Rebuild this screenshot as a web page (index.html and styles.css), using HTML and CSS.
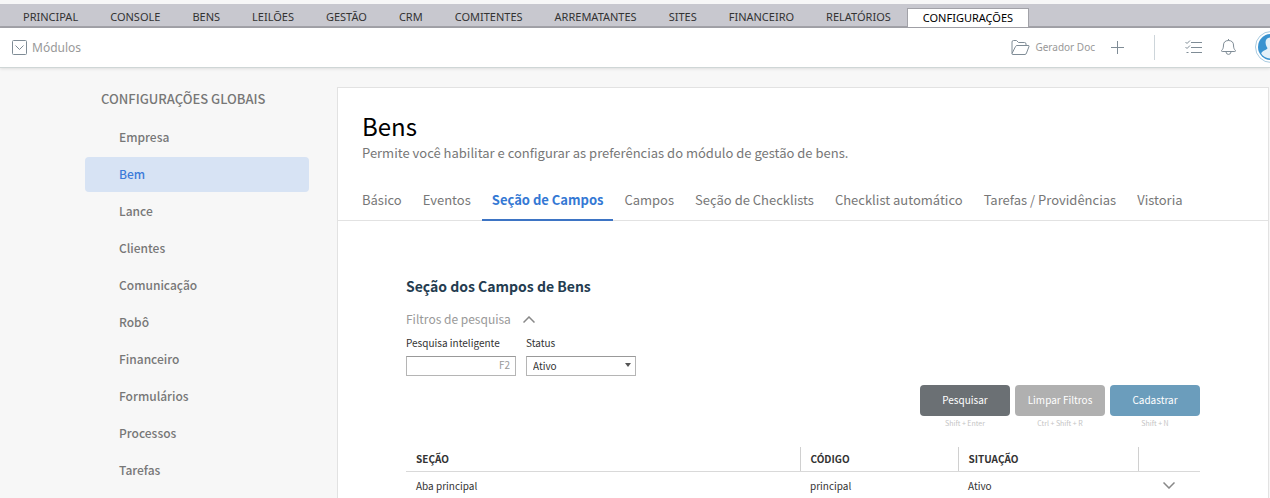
FILE: index.html
```html
<!DOCTYPE html>
<html lang="pt-BR">
<head>
  <meta charset="UTF-8" />
  <meta name="viewport" content="width=device-width, initial-scale=1.0"/>
  <title>Configurações - Bens</title>
  <link rel="stylesheet" href="styles.css">
</head>
<body>
  <nav class="topnav">
    <a href="#">PRINCIPAL</a>
    <a href="#">CONSOLE</a>
    <a href="#">BENS</a>
    <a href="#">LEILÕES</a>
    <a href="#">GESTÃO</a>
    <a href="#">CRM</a>
    <a href="#">COMITENTES</a>
    <a href="#">ARREMATANTES</a>
    <a href="#">SITES</a>
    <a href="#">FINANCEIRO</a>
    <a href="#">RELATÓRIOS</a>
    <a href="#" class="active">CONFIGURAÇÕES</a>
  </nav>

  <header class="toolbar">
    <button class="tool modules" type="button">
      <svg width="15" height="15" viewBox="0 0 15 15"><rect x="0.5" y="0.5" width="14" height="14" rx="1"/><path d="M3.500 5.500l4 4 4-4"/></svg>
      Módulos
    </button>
    <div class="tools">
      <button class="tool doc" type="button">
        <svg width="19" height="15" viewBox="0 0 19 15"><path d="M1 13.500V2Q1 .5 2.500 .5H5.500L7.500 2.500H13.500Q15 2.500 15 4V5.500M1 13.500L4.500 6.500Q5 5.500 6 5.500H17Q18.500 5.500 18 6.500L15.500 13Q15 14.500 14 14.500H2Q.8 14.500 1 13.500Z"/></svg>
        Gerador Doc
      </button>
      <button class="tool" type="button" aria-label="Adicionar">
        <svg width="13" height="13" viewBox="0 0 13 13"><path d="M6.500 0V13M0 6.500H13"/></svg>
      </button>
      <span class="divider"></span>
      <button class="tool" type="button" aria-label="Tarefas">
        <svg width="17" height="14" viewBox="0 0 17 14"><path d="M6 2.500H17M6 7.500H17M6 12.500H17M.5 2l1.500 1.500L5 .5M.5 7l1.500 1.500L5 5.500M1.500 12.500H3.500"/></svg>
      </button>
      <button class="tool bell" type="button" aria-label="Notificações">
        <svg width="15" height="16" viewBox="0 0 15 16"><path d="M7.500 0V1.500M7.500 1.500C4.200 1.500 2.500 3.500 2.500 6C2.500 9.500 1.500 10.500 .6 11.500Q.3 12.500 1.200 12.500H13.800Q14.700 12.500 14.400 11.500C13.500 10.500 12.500 9.500 12.500 6C12.500 3.500 10.800 1.500 7.500 1.500ZM5 13Q5.300 15.400 7.500 15.400Q9.700 15.400 10 13"/></svg>
      </button>
      <button class="avatar" type="button" aria-label="Usuário">
        <svg width="32" height="32" viewBox="0 0 32 32"><circle cx="16" cy="16" r="15.500" fill="#fff" stroke="#a9cbe0"/><circle cx="16" cy="16" r="13" fill="#3993d0" stroke="none"/><path fill="#e3f0f8" stroke="none" d="M16 6.500C12 6.500 10.300 9 10.600 12C10.800 14.500 11.800 16 12.500 17C12.300 19 7.500 19 6.200 22.500C8 26 12 27.500 16 27.500S24 26 25.800 22.500C24.500 19 19.700 19 19.500 17C20.200 16 21.200 14.500 21.400 12C21.700 9 20 6.500 16 6.500Z"/></svg>
      </button>
    </div>
  </header>

  <div class="layout">
    <aside class="sidebar">
      <h2>CONFIGURAÇÕES GLOBAIS</h2>
      <nav class="menu">
        <a href="#">Empresa</a>
        <a href="#" class="active">Bem</a>
        <a href="#">Lance</a>
        <a href="#">Clientes</a>
        <a href="#">Comunicação</a>
        <a href="#">Robô</a>
        <a href="#">Financeiro</a>
        <a href="#">Formulários</a>
        <a href="#">Processos</a>
        <a href="#">Tarefas</a>
      </nav>
    </aside>

    <main class="panel">
      <h1>Bens</h1>
      <p class="intro">Permite você habilitar e configurar as preferências do módulo de gestão de bens.</p>

      <nav class="tabs">
        <a href="#">Básico</a>
        <a href="#">Eventos</a>
        <a href="#" class="active">Seção de Campos</a>
        <a href="#">Campos</a>
        <a href="#">Seção de Checklists</a>
        <a href="#">Checklist automático</a>
        <a href="#">Tarefas / Providências</a>
        <a href="#">Vistoria</a>
      </nav>

      <section class="content">
        <h3>Seção dos Campos de Bens</h3>
        <button class="filter-toggle" type="button">
          Filtros de pesquisa
          <svg width="12" height="7" viewBox="0 0 12 7"><path d="M.5 6.500L6 1l5.500 5.500"/></svg>
        </button>

        <form class="filters">
          <div class="field">
            <label for="busca">Pesquisa inteligente</label>
            <input id="busca" type="text" placeholder="F2">
          </div>
          <div class="field">
            <label for="status">Status</label>
            <div class="select">
              <select id="status">
                <option>Ativo</option>
                <option>Inativo</option>
              </select>
            </div>
          </div>
        </form>

        <div class="actions">
          <div class="action">
            <button class="btn dark" type="button">Pesquisar</button>
            <small>Shift + Enter</small>
          </div>
          <div class="action">
            <button class="btn gray" type="button">Limpar Filtros</button>
            <small>Ctrl + Shift + R</small>
          </div>
          <div class="action">
            <button class="btn blue" type="button">Cadastrar</button>
            <small>Shift + N</small>
          </div>
        </div>

        <table class="list">
          <thead>
            <tr>
              <th>SEÇÃO</th>
              <th class="code">CÓDIGO</th>
              <th class="situation">SITUAÇÃO</th>
              <th class="more"></th>
            </tr>
          </thead>
          <tbody>
            <tr>
              <td>Aba principal</td>
              <td>principal</td>
              <td>Ativo</td>
              <td class="more">
                <button class="expand" type="button" aria-label="Abrir">
                  <svg width="12" height="7" viewBox="0 0 12 7"><path d="M.5 .5L6 6l5.500-5.500"/></svg>
                </button>
              </td>
            </tr>
          </tbody>
        </table>
      </section>
    </main>
  </div>
</body>
</html>
```
FILE: styles.css
```css
* {
  box-sizing: border-box;
}
body {
  margin: 0;
  padding-top: 4px;
  background: #f7f7f7;
  color: #333;
  font-family: "Noto Sans CJK SC", "Noto Sans", sans-serif;
  font-size: 10px;
  overflow: hidden;
}
a {
  color: inherit;
  text-decoration: none;
}
button {
  padding: 0;
  border: none;
  background: none;
  color: inherit;
  font: inherit;
  cursor: pointer;
}
svg {
  display: block;
  fill: none;
  stroke: #7f8c96;
}

/* top menu */
.topnav {
  display: flex;
  align-items: flex-end;
  height: 24px;
  padding-left: 7px;
  background: #c8c8cf;
  border-bottom: 2px solid #a2a2a8;
  font-family: "Noto Sans", sans-serif;
  font-size: 11px;
  line-height: 18px;
}
.topnav a {
  padding: 0 16px;
}
.topnav a.active {
  padding: 0 15px;
  margin-bottom: -1px;
  border: 1px solid #a2a2a8;
  border-bottom: none;
  background: #fff;
  color: #000;
}

/* toolbar */
.toolbar {
  display: flex;
  justify-content: space-between;
  align-items: center;
  height: 40px;
  padding: 0 0 1px 12px;
  overflow: hidden;
  background: #fff;
  border-bottom: 1px solid #cfd6d6;
  box-shadow: 0 1px 3px rgba(0, 0, 0, 0.1);
  font-family: "Noto Sans", sans-serif;
  color: #999;
}
.tool {
  display: flex;
  align-items: center;
  gap: 5px;
}
.modules {
  font-size: 12px;
}
.tools {
  display: flex;
  align-items: center;
  margin-right: -17px;
}
.doc {
  margin-right: 16px;
}
.divider {
  width: 1px;
  height: 25px;
  margin: 0 30px;
  background: #cdd5da;
}
.bell {
  margin: 0 19px;
}

/* page */
.layout {
  display: grid;
  grid-template-columns: 224px 1fr;
  gap: 28px;
  padding: 19px 1px 0 85px;
}
.sidebar h2 {
  margin: 0 0 9px 16px;
  color: #777;
  font-size: 13px;
  font-weight: 500;
  line-height: 24px;
}
.menu {
  display: grid;
  gap: 2px;
}
.menu a {
  height: 35px;
  padding-left: 34px;
  border-radius: 4px;
  color: #777;
  font-size: 12px;
  font-weight: 500;
  line-height: 33px;
}
.menu a.active {
  background: #d7e3f4;
  color: #3d7bd9;
}
.panel {
  background: #fff;
  border: 1px solid #e2e2e2;
}
.panel h1 {
  margin: 21px 24px 0;
  color: #000;
  font-size: 24px;
  font-weight: 400;
  line-height: 34px;
}
.intro {
  margin: 0 24px;
  color: #777;
  font-size: 13px;
  line-height: 20px;
}
.tabs {
  display: flex;
  gap: 1px;
  margin-top: 17px;
  padding: 0 14px;
  border-bottom: 1px solid #e2e2e2;
  color: #777;
  font-size: 13px;
  line-height: 39px;
}
.tabs a {
  padding: 0 10px;
  margin-bottom: -1px;
  border-bottom: 2px solid transparent;
}
.tabs a.active {
  border-color: #3d74c4;
  color: #3478d4;
  font-weight: 700;
}

/* section */
.content {
  padding: 53px 68px 0;
}
.content h3 {
  margin: 0;
  color: #243c50;
  font-size: 14px;
  font-weight: 700;
  line-height: 24px;
}
.filter-toggle {
  display: flex;
  align-items: center;
  gap: 12px;
  margin-top: 11px;
  color: #999;
  font-size: 12px;
  line-height: 20px;
}
.filter-toggle svg,
.expand svg {
  stroke: #888;
  stroke-width: 1.5;
}
.filters {
  display: flex;
  gap: 10px;
  margin-top: 5px;
}
.field {
  width: 110px;
}
.field label {
  display: block;
  margin-bottom: 4px;
  line-height: 18px;
}
.field input,
.field select {
  display: block;
  width: 100%;
  height: 20px;
  padding: 0 6px 1px;
  border: 1px solid #b5b5b5;
  border-top-color: #999;
  border-radius: 0;
  background: #fff;
  color: #333;
  font: inherit;
  appearance: none;
}
.field input {
  padding: 0 5px 3px;
}
.field input::placeholder {
  color: #999;
  text-align: right;
}
.select {
  position: relative;
}
.select::after {
  content: "";
  position: absolute;
  top: 7px;
  right: 5px;
  border: 3px solid transparent;
  border-top: 4px solid #555;
  border-bottom: none;
}
.actions {
  display: flex;
  justify-content: flex-end;
  gap: 5px;
  margin-top: 9px;
}
.action {
  width: 90px;
  text-align: center;
}
.btn {
  display: block;
  width: 100%;
  height: 31px;
  padding-bottom: 2px;
  border-radius: 4px;
  color: #fff;
}
.dark { background: #6b7074; }
.gray { background: #b0b0b0; }
.blue { background: #6b9dbc; }
.action small {
  display: block;
  color: #c4c4c4;
  font-size: 7px;
  line-height: 14px;
}
.list {
  width: 100%;
  margin-top: 17px;
  border-collapse: collapse;
  table-layout: fixed;
  text-align: left;
}
.list th {
  height: 24px;
  padding: 0 10px;
  border-bottom: 1px solid #d9d9d9;
  border-left: 1px solid #d0d0d0;
}
.list th:first-child {
  border-left: none;
}
.list td {
  height: 29px;
  padding: 0 10px;
}
.list .code { width: 158px; }
.list .situation { width: 180px; }
.list .more { width: 62px; }
.expand {
  display: block;
  margin: 0 auto;
}
```
